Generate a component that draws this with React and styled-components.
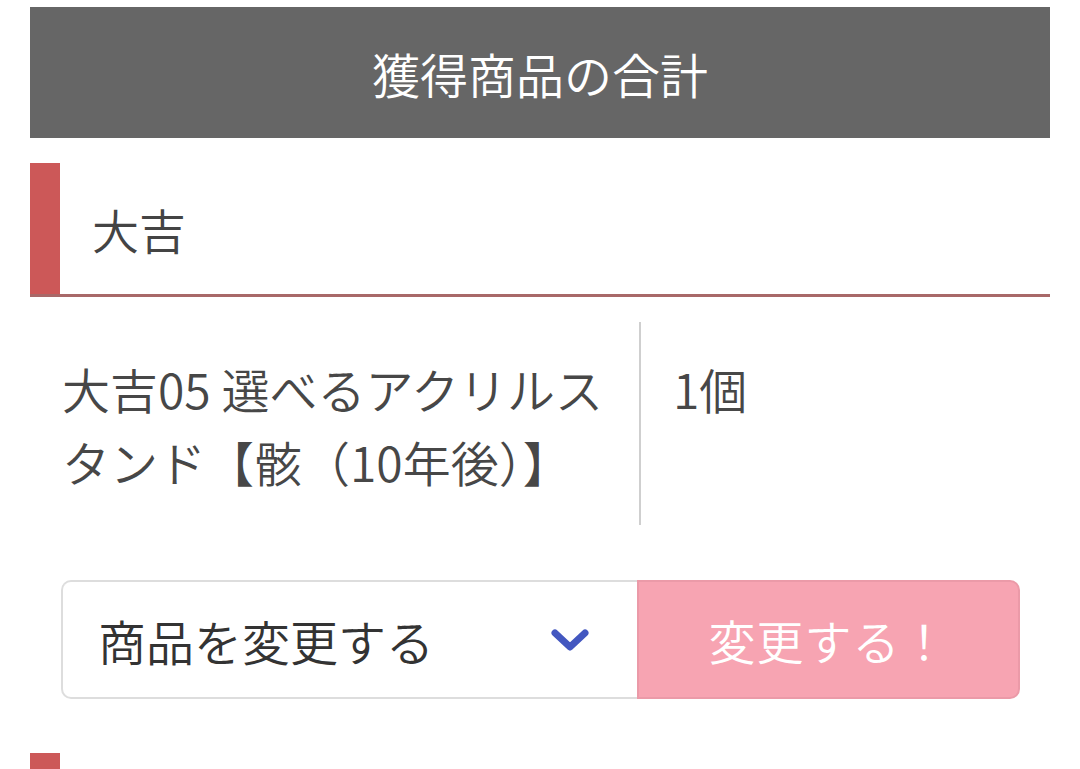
import React from "react";
import styled, { createGlobalStyle } from "styled-components";

const Global = createGlobalStyle`
  html, body { margin: 0; padding: 0; background: #fff; }
  body { font-family: "Noto Sans CJK JP", "Noto Sans", sans-serif; color: #474747; }
  * { box-sizing: border-box; }
`;

const W = 350;

const Page = styled.div`
  padding: 7px 30px 0;
  height: 769px;
  overflow: hidden;
`;

const TitleBar = styled.h2`
  margin: 0;
  height: 131px;
  background: #666666;
  color: #ffffff;
  display: flex;
  align-items: center;
  justify-content: center;
  font-size: 48px;
  font-weight: ${W};
  letter-spacing: 0;
`;

const Section = styled.section`
  margin-top: ${(p) => p.$gap}px;
`;

const SectionHeading = styled.h3`
  margin: 0;
  height: 134px;
  display: flex;
  align-items: center;
  padding-left: 62px;
  box-shadow: inset 30px 0 0 #cc5858;
  border-bottom: 3px solid #a86868;
  font-size: 47px;
  font-weight: ${W};
  color: #444;
`;

const ItemRow = styled.div`
  display: grid;
  grid-template-columns: 611px 1fr;
  margin-top: 25px;
`;

const ItemName = styled.div`
  padding: 30px 0 27px 32px;
  border-right: 2px solid #cfcfcf;
  font-size: 48px;
  font-weight: ${W};
  line-height: 73px;
  color: #474747;
`;

const ItemCount = styled.div`
  padding: 30px 32px 0;
  font-size: 48px;
  font-weight: ${W};
  line-height: 73px;
  color: #474747;
`;

const ChangeForm = styled.form`
  display: flex;
  height: 119px;
  margin: 55px 0 0 31px;
  width: 959px;
`;

const SelectWrap = styled.div`
  position: relative;
  flex: 0 0 576px;
  height: 100%;
`;

const Select = styled.select`
  appearance: none;
  -webkit-appearance: none;
  width: 100%;
  height: 100%;
  border: 2px solid #dddddd;
  border-right: none;
  border-radius: 10px 0 0 10px;
  background: #fff;
  padding: 0 0 0 35px;
  font-family: "Noto Sans CJK JP", sans-serif;
  font-size: 48px;
  font-weight: ${W};
  color: #333;
  outline: none;
`;

const Chevron = styled.svg`
  position: absolute;
  right: 46px;
  top: 50%;
  transform: translateY(-50%);
  pointer-events: none;
`;

const SubmitButton = styled.button`
  flex: 1;
  height: 100%;
  border: 2px solid #eb9aa8;
  border-radius: 0 10px 10px 0;
  background: #f7a4b2;
  color: #ffffff;
  font-family: "Noto Sans CJK JP", sans-serif;
  font-size: 47px;
  font-weight: ${W};
  letter-spacing: 1px;
  padding: 0;
`;

export default function App() {
  return (
    <>
      <Global />
      <Page>
        <TitleBar>獲得商品の合計</TitleBar>
        <Section $gap={25}>
          <SectionHeading>大吉</SectionHeading>
          <ItemRow>
            <ItemName>大吉05 選べるアクリルスタンド【骸（10年後）】</ItemName>
            <ItemCount>1個</ItemCount>
          </ItemRow>
          <ChangeForm onSubmit={(e) => e.preventDefault()}>
            <SelectWrap>
              <Select defaultValue="">
                <option value="">商品を変更する</option>
              </Select>
              <Chevron width="42" height="30" viewBox="0 0 42 30">
                <polyline
                  points="6,8 21,22 36,8"
                  fill="none"
                  stroke="#4357c0"
                  strokeWidth="7"
                  strokeLinecap="round"
                  strokeLinejoin="round"
                />
              </Chevron>
            </SelectWrap>
            <SubmitButton type="submit">変更する！</SubmitButton>
          </ChangeForm>
        </Section>
        <Section $gap={54}>
          <SectionHeading />
        </Section>
      </Page>
    </>
  );
}
